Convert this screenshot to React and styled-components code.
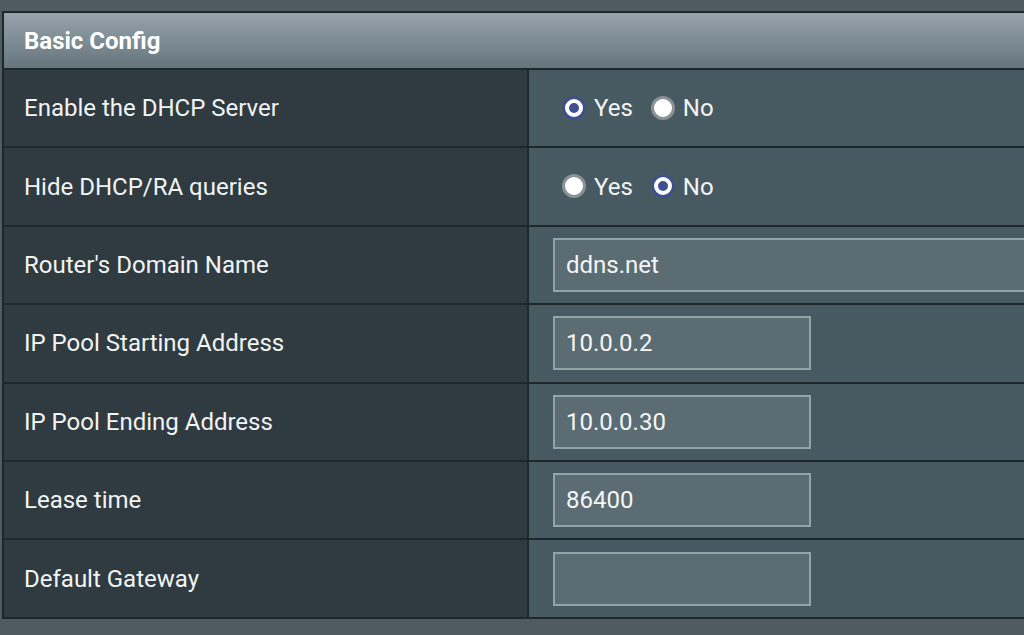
import React from 'react';
import styled, { createGlobalStyle } from 'styled-components';

const GlobalStyle = createGlobalStyle`
  body {
    margin: 0;
    background: #4f5b61;
    font-family: Roboto, "Liberation Sans", sans-serif;
    overflow: hidden;
  }
`;

const Page = styled.div`
  width: 1024px;
  height: 635px;
  padding: 11px 0 0 2px;
  box-sizing: border-box;
  overflow: hidden;
`;

const Table = styled.div`
  width: 1100px;
  border: 2px solid #1e272b;
  background: #1e272b;
`;

const Header = styled.div`
  height: 55px;
  display: flex;
  align-items: center;
  padding-left: 20px;
  background: linear-gradient(to bottom, #96a3aa, #66757c);
  color: #fff;
  font-size: 24px;
  font-weight: 700;
`;

const Row = styled.div`
  display: grid;
  grid-template-columns: 523px 1fr;
  column-gap: 2px;
  margin-top: 2px;
  height: 76.4px;
`;

const Label = styled.div`
  background: #2f3b40;
  color: #f2f4f5;
  display: flex;
  align-items: center;
  padding-left: 20px;
  font-size: 24px;
`;

const Cell = styled.div`
  background: #475a61;
  display: flex;
  align-items: center;
  padding-left: 24px;
  color: #f2f4f5;
  font-size: 24px;
`;

const Input = styled.div`
  width: ${p => (p.$wide ? '700px' : '243px')};
  height: 50px;
  box-sizing: content-box;
  border: 2px solid #93a3a9;
  background: #5b6d73;
  display: flex;
  align-items: center;
  padding-left: 11px;
  color: #f4f6f7;
  font-size: 24px;
`;

const RadioGroup = styled.div`
  display: flex;
  align-items: center;
  gap: 19px;
  padding-left: 10px;
`;

const RadioOption = styled.label`
  display: flex;
  align-items: center;
  gap: 11px;
`;

const Dot = styled.span`
  width: 18px;
  height: 18px;
  border-radius: 50%;
  background: ${p => (p.$on ? '#3e508f' : '#ffffff')};
  border: ${p => (p.$on ? '4px solid #ffffff' : '2px solid #ffffff')};
  box-shadow: ${p => (p.$on ? '0 0 0 2.5px #3d4f8e' : '0 0 0 3px #8a9296')};
  box-sizing: border-box;
  margin: -1px 0 0 2px;
`;

function Radio({ value }) {
  return (
    <RadioGroup>
      <RadioOption><Dot $on={value === 'yes'} />Yes</RadioOption>
      <RadioOption><Dot $on={value === 'no'} />No</RadioOption>
    </RadioGroup>
  );
}

const rows = [
  { label: 'Enable the DHCP Server', radio: 'yes' },
  { label: 'Hide DHCP/RA queries', radio: 'no' },
  { label: "Router's Domain Name", input: 'ddns.net', wide: true },
  { label: 'IP Pool Starting Address', input: '10.0.0.2' },
  { label: 'IP Pool Ending Address', input: '10.0.0.30' },
  { label: 'Lease time', input: '86400' },
  { label: 'Default Gateway', input: '' },
];

export default function App() {
  return (
    <Page>
      <GlobalStyle />
      <Table>
        <Header>Basic Config</Header>
        {rows.map(r => (
          <Row key={r.label}>
            <Label>{r.label}</Label>
            <Cell>
              {r.radio ? <Radio value={r.radio} /> : <Input $wide={r.wide}>{r.input}</Input>}
            </Cell>
          </Row>
        ))}
      </Table>
    </Page>
  );
}
